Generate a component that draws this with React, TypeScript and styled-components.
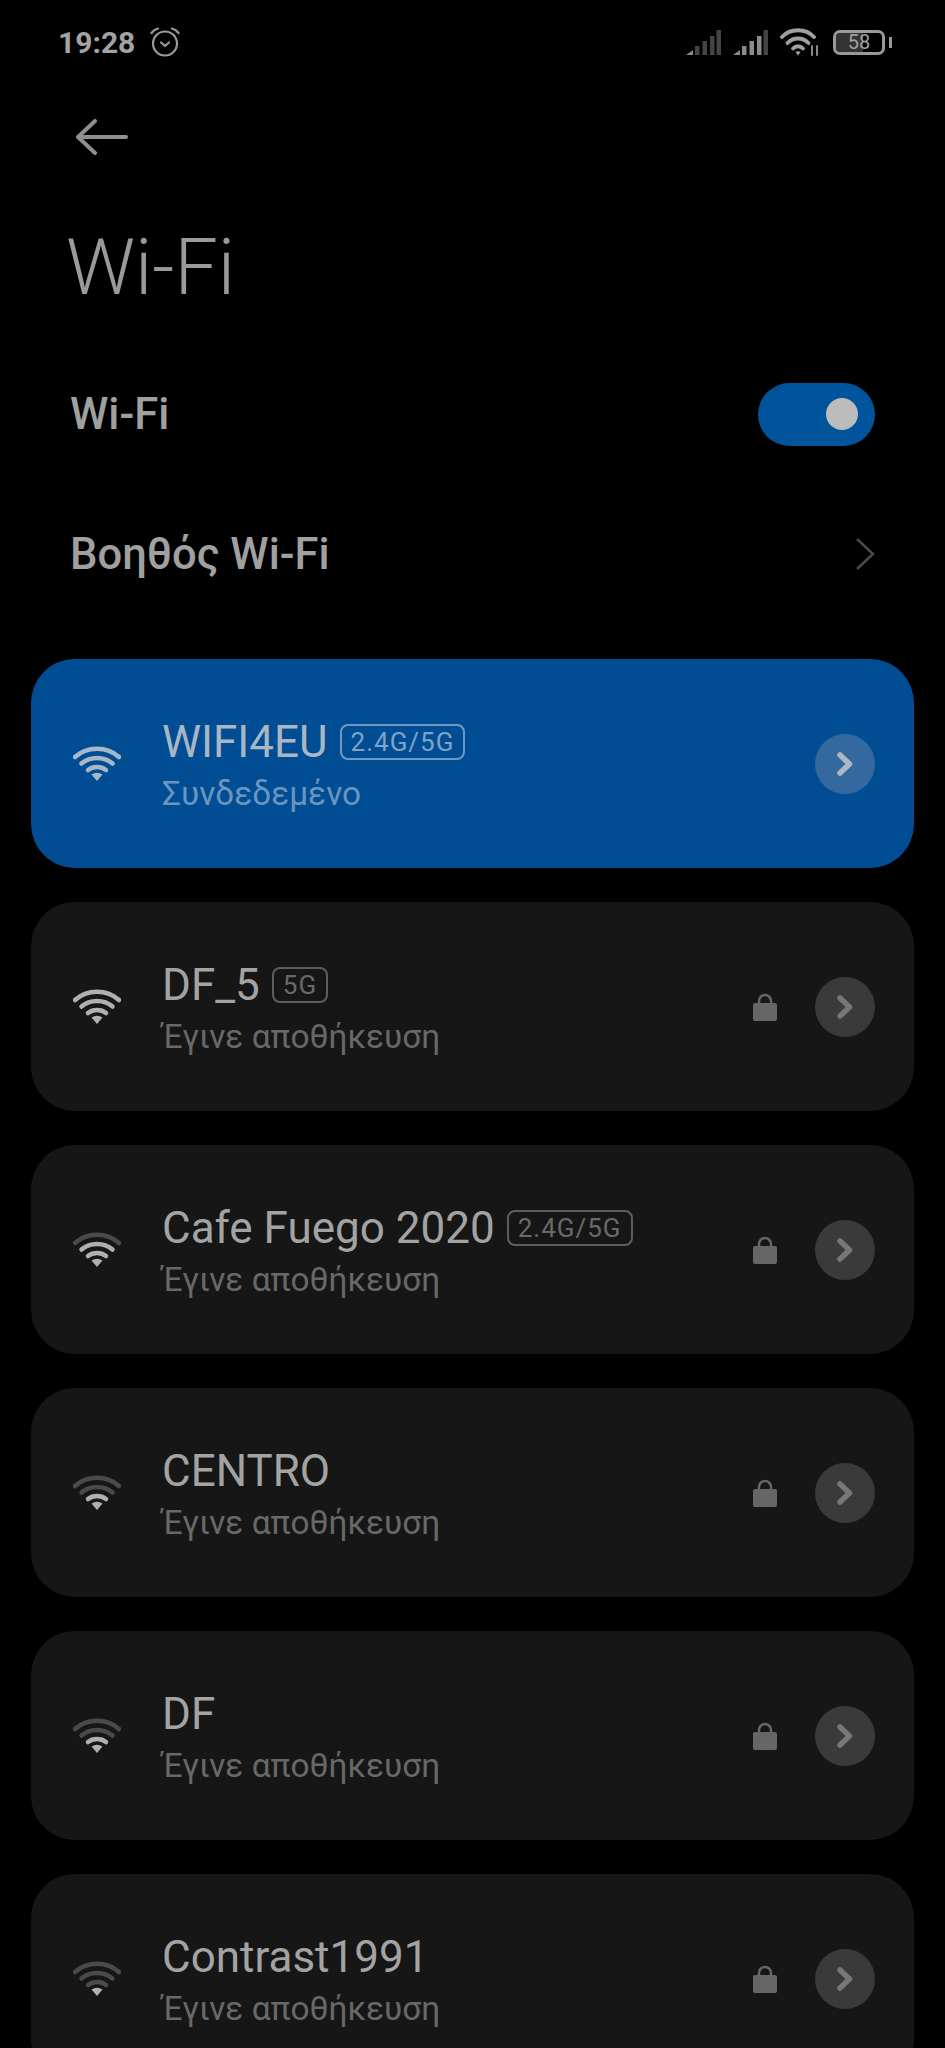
import React from "react";
import styled, { createGlobalStyle } from "styled-components";

const Global = createGlobalStyle`
  html, body { margin: 0; padding: 0; background: #000; }
  body { font-family: Roboto, "Noto Sans", sans-serif; }
`;

const Screen = styled.div`
  width: 945px;
  height: 2048px;
  overflow: hidden;
  background: #000;
`;

const StatusBar = styled.div`
  height: 84px;
  padding: 0 53px 0 58px;
  display: flex;
  align-items: center;
  justify-content: space-between;
  box-sizing: border-box;
`;

const StatusGroup = styled.div`
  display: flex;
  align-items: center;
`;

const Time = styled.span`
  font-size: 30px;
  font-weight: 700;
  color: #a3a3a3;
  margin-right: 15px;
`;

const BackRow = styled.div`
  height: 54px;
  padding-left: 76px;
  margin-top: 26px;
  display: flex;
  align-items: center;
`;

const Title = styled.h1`
  margin: 59px 0 31px 66px;
  font-size: 77px;
  line-height: 90px;
  font-weight: 300;
  color: #9a9a9a;
`;

const SettingRow = styled.div`
  height: 140px;
  padding: 0 70px 0 70px;
  display: flex;
  align-items: center;
  justify-content: space-between;
`;

const SettingLabel = styled.span`
  font-size: 43.5px;
  font-weight: 500;
  color: #a0a0a0;
`;

const Toggle = styled.div`
  width: 117px;
  height: 63px;
  border-radius: 32px;
  background: #00549c;
  display: flex;
  align-items: center;
  justify-content: flex-end;
  padding-right: 17px;
  box-sizing: border-box;
`;

const Knob = styled.div`
  width: 32px;
  height: 32px;
  border-radius: 50%;
  background: #bcbcbc;
`;

const List = styled.div`
  margin: 35px 31px 0;
  display: flex;
  flex-direction: column;
  gap: 34px;
`;

const Card = styled.div<{ $active?: boolean }>`
  flex: none;
  height: 209px;
  border-radius: 44px;
  background: ${(p) => (p.$active ? "#004d94" : "#161616")};
  display: flex;
  align-items: center;
  padding: 0 39px 0 42px;
  box-sizing: border-box;
`;

const Body = styled.div`
  margin-left: 41px;
  padding-top: 3px;
  flex: 1;
  min-width: 0;
  display: flex;
  flex-direction: column;
`;

const NameRow = styled.div`
  display: flex;
  align-items: center;
  height: 54px;
`;

const Name = styled.span<{ $active?: boolean }>`
  font-size: 44px;
  font-weight: 400;
  color: ${(p) => (p.$active ? "#a9b6c5" : "#a3a3a3")};
`;

const Tag = styled.span<{ $active?: boolean }>`
  margin-left: 12px;
  height: 36px;
  padding: 0 9px;
  box-sizing: border-box;
  display: inline-flex;
  align-items: center;
  border: 2px solid ${(p) => (p.$active ? "#6f97bf" : "#5d5d5d")};
  border-radius: 8px;
  font-size: 26px;
  letter-spacing: 1px;
  color: ${(p) => (p.$active ? "#7ea3c6" : "#696969")};
`;

const Sub = styled.span<{ $active?: boolean }>`
  margin-top: 3px;
  font-size: 33.4px;
  line-height: 44px;
  color: ${(p) => (p.$active ? "#6a95bf" : "#686868")};
`;

const Arrow = styled.div<{ $active?: boolean }>`
  width: 60px;
  height: 60px;
  border-radius: 50%;
  margin-left: 38px;
  background: ${(p) => (p.$active ? "#34699f" : "#3a3a3a")};
  display: flex;
  align-items: center;
  justify-content: center;
`;

const WifiIcon = ({ dim = 0, lit = "#b0b0b0", off = "#4a4a4a" }: { dim?: number; lit?: string; off?: string }) => {
  const c = (i: number) => (i < dim ? off : lit);
  return (
    <svg width="48" height="36" viewBox="0 0 48 36" fill="none" strokeLinecap="round" strokeWidth="4.500">
      <path d="M2 11C14 0 34 0 46 11" stroke={c(0)} />
      <path d="M8.5 17.500C17 10 31 10 39.500 17.500" stroke={c(1)} />
      <path d="M15 24C20 20 28 20 33 24" stroke={c(2)} />
      <path d="M18.500 28.500Q24 25 29.500 28.500L24 35Z" fill={lit} stroke="none" />
    </svg>
  );
};

const LockIcon = () => (
  <svg width="24" height="28" viewBox="0 0 24 28" fill="none">
    <path d="M6 12V8a6 6 0 0 1 12 0v4" stroke="#666" strokeWidth="2.500" />
    <rect x="0" y="10" width="24" height="18" rx="2" fill="#666" />
  </svg>
);

const Chevron = ({ color }: { color: string }) => (
  <svg width="16" height="24" viewBox="0 0 16 24" fill="none">
    <path d="M3 3L12.500 12L3 21" stroke={color} strokeWidth="5.500" strokeLinecap="round" strokeLinejoin="round" />
  </svg>
);

const AlarmIcon = () => (
  <svg width="30" height="30" viewBox="0 0 30 30" fill="none" stroke="#9a9a9a" strokeWidth="2.200" strokeLinecap="round" strokeLinejoin="round">
    <circle cx="15" cy="16.500" r="12" />
    <path d="M11 15.500L15 19L19 15.500" />
    <path d="M1.500 6Q4 2.500 8 1.500" />
    <path d="M28.500 6Q26 2.500 22 1.500" />
  </svg>
);

const SignalIcon = ({ on }: { on: number }) => (
  <svg width="35" height="25" viewBox="0 0 35 25">
    <path d="M0 25L7 20V25Z" fill={on > 0 ? "#8a8a8a" : "#444"} />
    {[9, 16.5, 24, 30.5].map((x, i) => {
      const h = [9, 14, 19, 25][i];
      return <rect key={x} x={x} y={25 - h} width="4.500" height={h} fill={i + 1 < on ? "#8a8a8a" : "#444"} />;
    })}
  </svg>
);

const SignalGap = styled.span`
  width: 12px;
`;

const StatusWifi = () => (
  <svg width="41" height="28" viewBox="0 0 41 28" fill="none" stroke="#a0a0a0" strokeWidth="3.800" strokeLinecap="round">
    <path d="M2 9C10 0 26 0 34 9" />
    <path d="M7.500 15C13 9 23 9 28.500 15" />
    <path d="M13 20.500C16 17.500 20 17.500 23 20.500" />
    <path d="M15.500 24Q18 22.500 20.500 24L18 27.500Z" fill="#a0a0a0" stroke="none" />
    <path d="M32 18V27M37 18V27" strokeWidth="2" stroke="#888" />
  </svg>
);

const Battery = styled.div`
  position: relative;
  width: 52px;
  height: 25px;
  border: 3px solid #999;
  border-radius: 7px;
  box-sizing: border-box;
  margin-left: 12px;
  margin-right: 7px;
  display: flex;
  align-items: center;
  justify-content: center;
  font-size: 20px;
  color: #a0a0a0;
  background: linear-gradient(90deg, #333 58%, transparent 58%);
  background-clip: padding-box;
  &::after {
    content: "";
    position: absolute;
    right: -10px;
    top: 4px;
    width: 3px;
    height: 11px;
    background: #999;
  }
`;

const nets = [
  { name: "WIFI4EU", tag: "2.4G/5G", sub: "Συνδεδεμένο", active: true, dim: 0 },
  { name: "DF_5", tag: "5G", sub: "Έγινε αποθήκευση", dim: 0 },
  { name: "Cafe Fuego 2020", tag: "2.4G/5G", sub: "Έγινε αποθήκευση", dim: 1 },
  { name: "CENTRO", sub: "Έγινε αποθήκευση", dim: 2 },
  { name: "DF", sub: "Έγινε αποθήκευση", dim: 2 },
  { name: "Contrast1991", sub: "Έγινε αποθήκευση", dim: 3 },
];

export default function App() {
  return (
    <Screen>
      <Global />
      <StatusBar>
        <StatusGroup>
          <Time>19:28</Time>
          <AlarmIcon />
        </StatusGroup>
        <StatusGroup>
          <SignalIcon on={1} />
          <SignalGap />
          <SignalIcon on={4} />
          <SignalGap />
          <StatusWifi />
          <Battery>58</Battery>
        </StatusGroup>
      </StatusBar>
      <BackRow>
        <svg width="52" height="36" viewBox="0 0 52 36" fill="none" stroke="#8f8f8f" strokeWidth="4" strokeLinecap="round" strokeLinejoin="round">
          <path d="M2 18H50M19 2L2 18L19 34" />
        </svg>
      </BackRow>
      <Title>Wi-Fi</Title>
      <SettingRow>
        <SettingLabel>Wi-Fi</SettingLabel>
        <Toggle>
          <Knob />
        </Toggle>
      </SettingRow>
      <SettingRow>
        <SettingLabel>Βοηθός Wi-Fi</SettingLabel>
        <svg width="20" height="34" viewBox="0 0 20 34" fill="none" stroke="#4a4a4a" strokeWidth="2.500">
          <path d="M2 2L18 17L2 32" />
        </svg>
      </SettingRow>
      <List>
        {nets.map((n) => (
          <Card key={n.name} $active={n.active}>
            <WifiIcon dim={n.dim} lit={n.active ? "#a9b6c5" : "#b0b0b0"} />
            <Body>
              <NameRow>
                <Name $active={n.active}>{n.name}</Name>
                {n.tag && <Tag $active={n.active}>{n.tag}</Tag>}
              </NameRow>
              <Sub $active={n.active}>{n.sub}</Sub>
            </Body>
            {!n.active && <LockIcon />}
            <Arrow $active={n.active}>
              <Chevron color={n.active ? "#aeb7c2" : "#777"} />
            </Arrow>
          </Card>
        ))}
      </List>
    </Screen>
  );
}
